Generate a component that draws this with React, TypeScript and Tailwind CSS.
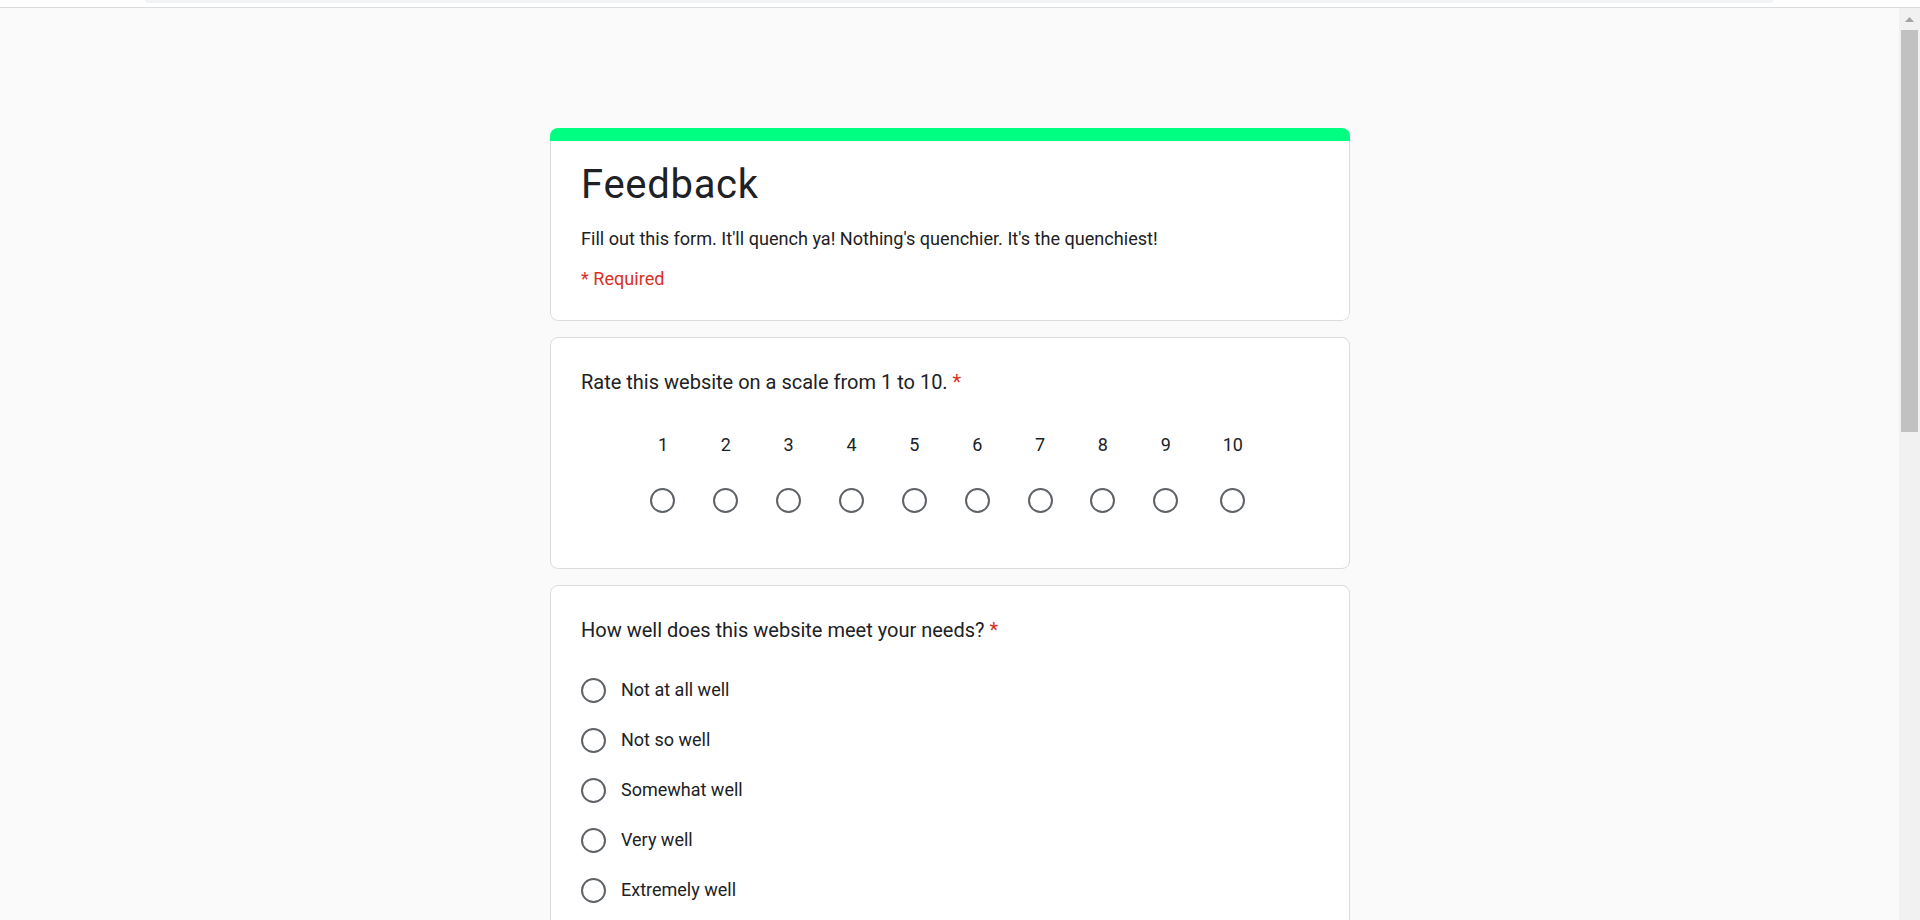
import React from "react";

const font = { fontFamily: "Roboto, 'Liberation Sans', Arial, sans-serif" };

function Radio() {
  return <span className="block w-[25px] h-[25px] shrink-0 rounded-full border-2 border-[#5f6368] box-border" />;
}

function Req() {
  return <span className="text-[#d93025]"> *</span>;
}

export default function App() {
  const nums = [1, 2, 3, 4, 5, 6, 7, 8, 9, 10];
  const options = ["Not at all well", "Not so well", "Somewhat well", "Very well", "Extremely well"];
  return (
    <div className="h-[920px] w-full overflow-hidden flex flex-col bg-[#fafafa] text-[#202124]" style={font}>
      {/* top strip */}
      <div className="h-[8px] shrink-0 bg-white border-b border-[#dadce0] flex">
        <div className="ml-[145px] w-[1628px] h-[3px] bg-[#f1f3f4] rounded-b-[6px]" />
      </div>
      <div className="flex-1 flex min-h-0">
        {/* content */}
        <div className="flex-1 min-w-0 overflow-hidden flex flex-col items-center pl-[1px] pt-[120px]">
          {/* Header card */}
          <div className="w-[800px] shrink-0 rounded-[8px] overflow-hidden bg-white">
            <div className="h-[13px] bg-[#00ff80]" />
            <div className="border-x border-b border-[#dadce0] rounded-b-[8px] px-[30px] pt-[20px] pb-[29px]">
              <div className="text-[40px] leading-[48px] tracking-[0.7px]">Feedback</div>
              <div className="mt-[18px] text-[18.1px] leading-[24px]">
                Fill out this form. It'll quench ya! Nothing's quenchier. It's the quenchiest!
              </div>
              <div className="mt-[16px] text-[18.1px] leading-[24px] text-[#d93025]">* Required</div>
            </div>
          </div>

          {/* Rating card */}
          <div className="mt-[16px] w-[800px] shrink-0 rounded-[8px] bg-white border border-[#dadce0] px-[30px] pt-[30px] pb-[55px]">
            <div className="text-[20px] leading-[28px]">
              Rate this website on a scale from 1 to 10.<Req />
            </div>
            <div className="mt-[37px] flex justify-center">
              {nums.map((n) => (
                <div key={n} className={n === 10 ? "w-[71.3px] flex flex-col items-center" : "w-[62.85px] flex flex-col items-center"}>
                  <span className="text-[18px] leading-[24px]">{n}</span>
                  <div className="mt-[31px]">
                    <Radio />
                  </div>
                </div>
              ))}
            </div>
          </div>

          {/* Needs card */}
          <div className="mt-[16px] w-[800px] shrink-0 rounded-[8px] bg-white border border-[#dadce0] px-[30px] pt-[30px] pb-[30px]">
            <div className="text-[20px] leading-[28px]">
              How well does this website meet your needs?<Req />
            </div>
            <div className="mt-[21px] flex flex-col">
              {options.map((o) => (
                <div key={o} className="h-[50px] flex items-center">
                  <Radio />
                  <span className="ml-[15px] text-[18px] leading-[24px]">{o}</span>
                </div>
              ))}
            </div>
          </div>
        </div>

        {/* scrollbar */}
        <div className="w-[21px] shrink-0 bg-[#f1f1f1] flex flex-col items-center">
          <div className="h-[22px] w-full flex items-center justify-center">
            <svg width="9" height="5" viewBox="0 0 9 5">
              <polygon points="4.5,0 9,5 0,5" fill="#a3a3a3" />
            </svg>
          </div>
          <div className="w-[17px] h-[402px] bg-[#c1c1c1]" />
        </div>
      </div>
    </div>
  );
}
